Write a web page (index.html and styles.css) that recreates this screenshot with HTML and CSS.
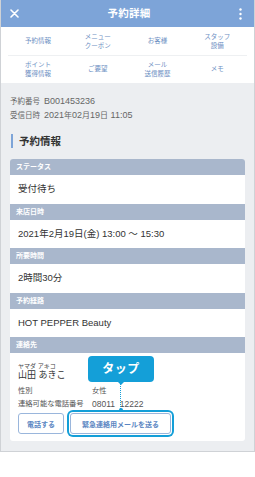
FILE: index.html
```html
<!DOCTYPE html>
<html lang="ja">
<head>
<meta charset="utf-8">
<title>予約詳細</title>
<link rel="stylesheet" href="styles.css">
</head>
<body>
<div class="phone">
  <header class="topbar">
    <svg class="close" width="9" height="9" viewBox="0 0 9 9"><path d="M1 1L8 8M8 1L1 8" stroke="#fff" stroke-width="1.6" stroke-linecap="round"/></svg>
    <h1 class="title">予約詳細</h1>
    <svg class="more" width="3" height="12" viewBox="0 0 3 12"><circle cx="1.5" cy="1.5" r="1.2" fill="#fff"/><circle cx="1.5" cy="6" r="1.2" fill="#fff"/><circle cx="1.5" cy="10.5" r="1.2" fill="#fff"/></svg>
  </header>
  <nav class="tabs">
    <div class="tab-row">
      <span class="tab">予約情報</span>
      <span class="tab">メニュー<br>クーポン</span>
      <span class="tab">お客様</span>
      <span class="tab">スタッフ<br>設備</span>
    </div>
    <div class="tab-row">
      <span class="tab">ポイント<br>獲得情報</span>
      <span class="tab">ご要望</span>
      <span class="tab">メール<br>送信履歴</span>
      <span class="tab">メモ</span>
    </div>
  </nav>
  <main class="content">
    <div class="meta">
      <div class="meta-line"><span class="meta-label">予約番号</span><span class="meta-value">B001453236</span></div>
      <div class="meta-line"><span class="meta-label">受信日時</span><span class="meta-value">2021<span class="cjk">年</span>02<span class="cjk">月</span>19<span class="cjk">日</span> 11:05</span></div>
    </div>
    <h2 class="heading">予約情報</h2>
    <section class="card">
      <div class="sec-head">ステータス</div>
      <div class="sec-value">受付待ち</div>
      <div class="sec-head">来店日時</div>
      <div class="sec-value">2021年2月19日(金) 13:00 ～ 15:30</div>
      <div class="sec-head">所要時間</div>
      <div class="sec-value">2時間30分</div>
      <div class="sec-head">予約経路</div>
      <div class="sec-value">HOT PEPPER Beauty</div>
      <div class="sec-head">連絡先</div>
      <div class="contact">
        <div class="kana">ヤマダ アキコ</div>
        <div class="name">山田 あきこ</div>
        <div class="row row-first"><span class="row-label">性別</span><span>女性</span></div>
        <div class="row"><span class="row-label">連絡可能な電話番号</span><span class="num">08011&nbsp;&nbsp;12222</span></div>
        <div class="buttons">
          <button class="btn">電話する</button>
          <button class="btn btn-wide">緊急連絡用メールを送る</button>
        </div>
        <div class="callout">タップ</div>
        <div class="pointer-line"></div>
        <div class="pointer-dot"></div>
      </div>
    </section>
  </main>
</div>
</body>
</html>
```
FILE: styles.css
```css
* { box-sizing: border-box; margin: 0; padding: 0; }
html, body { background: #fff; }
body {
  font-family: "Liberation Sans", "Noto Sans CJK JP", sans-serif;
  color: #333;
  width: 255px;
}
.phone {
  width: 255px;
  border: 1px solid #cfd2d6;
  border-top: none;
  background: #eceef1;
}
.topbar {
  height: 27px;
  background: #7da4d8;
  display: flex;
  align-items: center;
  justify-content: space-between;
  padding: 0 12px 0 9px;
}
.close { display: block; }
.more { display: block; }
.title {
  color: #fff;
  font-size: 10.5px;
  font-weight: 700;
  line-height: 1;
  letter-spacing: 0.2px;
}
.tabs {
  background: #fff;
  padding: 0 7px;
  height: 56px;
  display: flex;
  flex-direction: column;
}
.tab-row {
  display: grid;
  grid-template-columns: repeat(4, 1fr);
  align-items: center;
  height: 28px;
}
.tab-row + .tab-row {
  border-top: 1px solid #eef0f2;
  height: 27px;
}
.tab {
  text-align: center;
  font-size: 6.5px;
  line-height: 9.5px;
  color: #6e8fc3;
}
.content {
  padding: 11px 9px 10px;
}
.meta-line {
  display: flex;
  align-items: baseline;
  height: 14px;
  line-height: 14px;
  color: #666;
}
.meta-label { font-size: 7.5px; width: 34px; }
.meta-value { font-size: 9px; }
.cjk { font-size: 8px; }
.heading {
  margin: 12px 0 11px 1px;
  border-left: 2px solid #7da4d8;
  padding-left: 6px;
  font-size: 10.5px;
  font-weight: 700;
  line-height: 14px;
  color: #333;
}
.card {
  background: #fff;
  border-radius: 3px;
}
.sec-head {
  height: 16px;
  line-height: 16px;
  background: #a9b7cc;
  color: #fff;
  font-size: 7px;
  font-weight: 700;
  padding-left: 6px;
}
.card .sec-head:first-child { border-radius: 3px 3px 0 0; }
.sec-value {
  height: 28.5px;
  line-height: 28.5px;
  font-size: 9.5px;
  padding-left: 8px;
  color: #333;
}
.contact {
  position: relative;
  padding: 9px 8px 7px;
}
.kana { font-size: 6px; line-height: 8px; color: #444; }
.name { font-size: 9px; line-height: 11px; color: #333; }
.row {
  display: flex;
  font-size: 7.3px;
  line-height: 10px;
  color: #555;
  margin-top: 3px;
}
.num { font-size: 8.5px; }
.row-first { margin-top: 5px; }
.row-label { width: 74px; }
.buttons {
  display: flex;
  gap: 6px;
  margin-top: 4px;
}
.btn {
  height: 21px;
  border: 1px solid #9ab6dc;
  border-radius: 3px;
  background: #fff;
  color: #5b86c2;
  font-family: inherit;
  font-size: 7px;
  font-weight: 700;
  padding: 0;
  width: 46px;
}
.btn-wide {
  width: 101px;
  box-shadow: 0 0 0 1px #fff, 0 0 0 3px #149fd8;
}
.callout {
  position: absolute;
  left: 78px;
  top: 3px;
  width: 66px;
  height: 26px;
  background: #149fd8;
  color: #fff;
  border-radius: 4px;
  font-size: 12px;
  font-weight: 700;
  text-align: center;
  line-height: 26px;
  letter-spacing: 0.5px;
}
.callout::after {
  content: "";
  position: absolute;
  left: 30px;
  bottom: -3px;
  border-left: 3px solid transparent;
  border-right: 3px solid transparent;
  border-top: 3px solid #149fd8;
}
.pointer-line {
  position: absolute;
  left: 110px;
  top: 31px;
  height: 25px;
  border-left: 1px dotted #149fd8;
}
.pointer-dot {
  position: absolute;
  left: 109px;
  top: 55px;
  width: 4px;
  height: 4px;
  border-radius: 50%;
  background: #149fd8;
}
```
